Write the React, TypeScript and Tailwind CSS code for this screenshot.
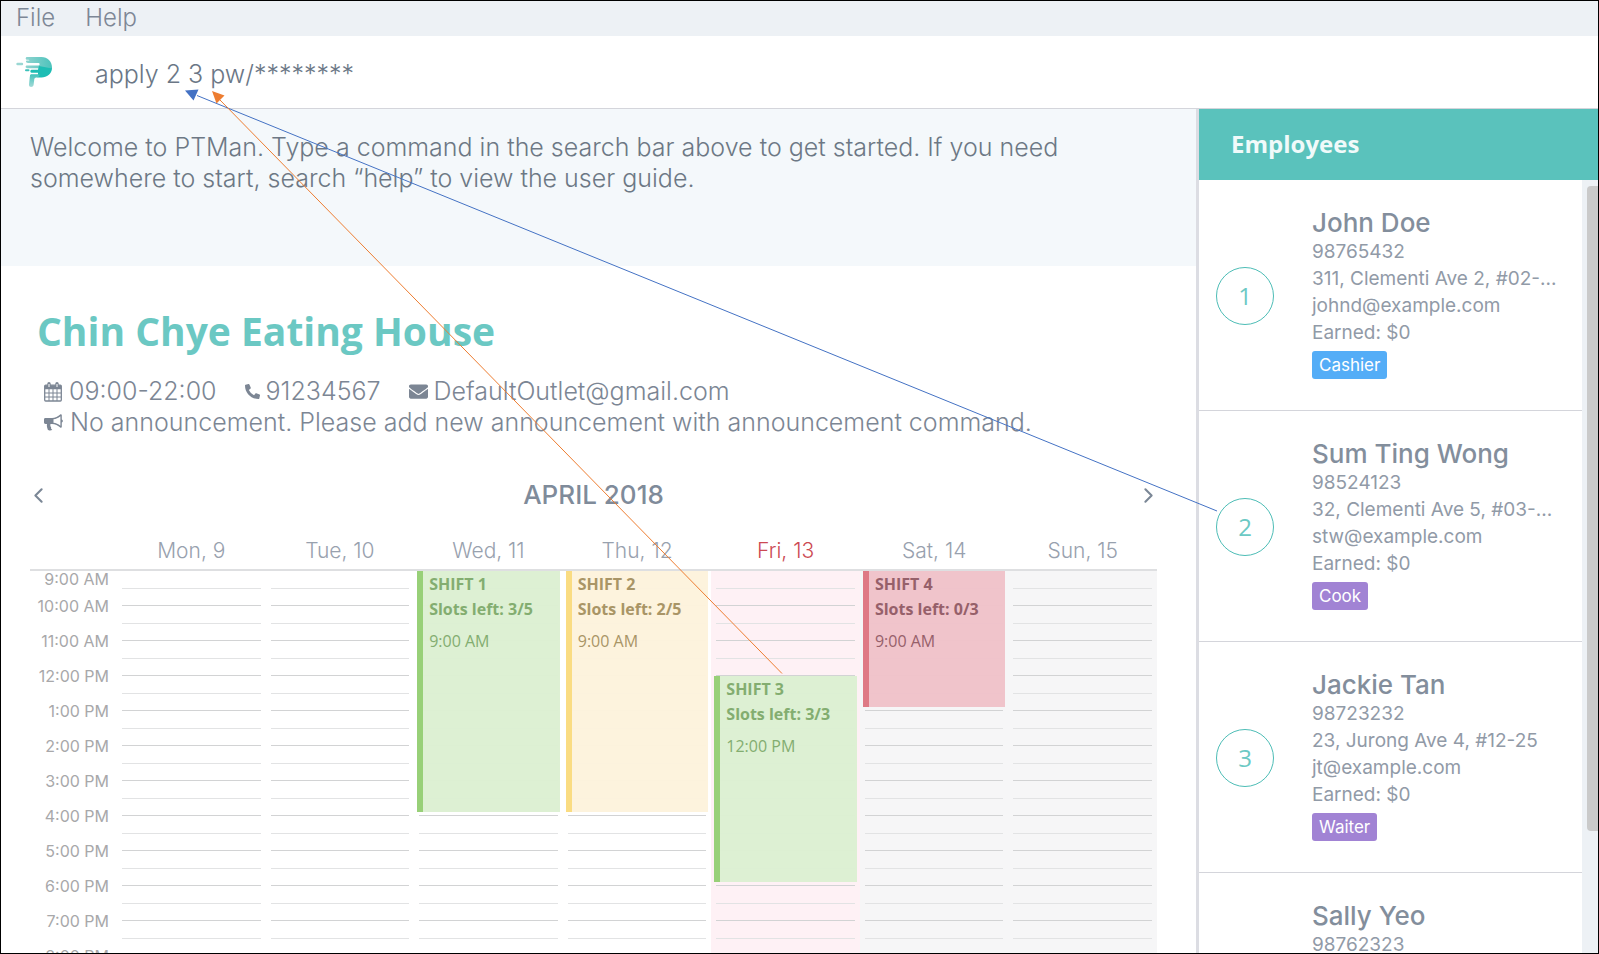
import { FaPhoneAlt, FaEnvelope } from "react-icons/fa";
import { FiChevronLeft, FiChevronRight } from "react-icons/fi";

type Shift = { name: string; slots: string; time: string; start: number; hours: number; tone: keyof typeof tones };
type Day = { label: string; today?: boolean; weekend?: boolean; shift?: Shift };
type Employee = { id: number; name: string; phone: string; address: string; email: string; earned: string; tag: string; tagColor: string };

const tones = {
  green: "border-[#98d078] bg-[#dcefd2]/97 text-[#83ad70]",
  yellow: "border-[#fadc82] bg-[#fdf3dc]/97 text-[#a99566]",
  red: "border-[#de7a85] bg-[#efc2c9]/97 text-[#96606a]",
};

const days: Day[] = [
  { label: "Mon, 9" },
  { label: "Tue, 10" },
  { label: "Wed, 11", shift: { name: "SHIFT 1", slots: "3/5", time: "9:00 AM", start: 0, hours: 7, tone: "green" } },
  { label: "Thu, 12", shift: { name: "SHIFT 2", slots: "2/5", time: "9:00 AM", start: 0, hours: 7, tone: "yellow" } },
  { label: "Fri, 13", today: true, shift: { name: "SHIFT 3", slots: "3/3", time: "12:00 PM", start: 3, hours: 6, tone: "green" } },
  { label: "Sat, 14", weekend: true, shift: { name: "SHIFT 4", slots: "0/3", time: "9:00 AM", start: 0, hours: 4, tone: "red" } },
  { label: "Sun, 15", weekend: true },
];

const hours = ["10:00 AM", "11:00 AM", "12:00 PM", "1:00 PM", "2:00 PM", "3:00 PM", "4:00 PM", "5:00 PM", "6:00 PM", "7:00 PM", "8:00 PM"];
const HOUR = 35;

const employees: Employee[] = [
  { id: 1, name: "John Doe", phone: "98765432", address: "311, Clementi Ave 2, #02-...", email: "johnd@example.com", earned: "$0", tag: "Cashier", tagColor: "bg-[#54adf7]" },
  { id: 2, name: "Sum Ting Wong", phone: "98524123", address: "32, Clementi Ave 5, #03-...", email: "stw@example.com", earned: "$0", tag: "Cook", tagColor: "bg-[#a183d4]" },
  { id: 3, name: "Jackie Tan", phone: "98723232", address: "23, Jurong Ave 4, #12-25", email: "jt@example.com", earned: "$0", tag: "Waiter", tagColor: "bg-[#a183d4]" },
  { id: 4, name: "Sally Yeo", phone: "98762323", address: "", email: "", earned: "$0", tag: "Cook", tagColor: "bg-[#a183d4]" },
];

function Logo() {
  return (
    <svg viewBox="0 0 36 30" className="h-[30px] w-9" aria-label="PTMan" role="img">
      <defs>
        <linearGradient id="top" x1="0" y1="0" x2="1" y2="0">
          <stop offset="0" stopColor="#8fd3cf" />
          <stop offset="1" stopColor="#4cc3bc" />
        </linearGradient>
        <linearGradient id="stem" x1="0" y1="0" x2="0" y2="1">
          <stop offset="0" stopColor="#45c2bb" />
          <stop offset="1" stopColor="#a3dad7" />
        </linearGradient>
      </defs>
      <path fill="url(#top)" d="M11 0H25.500C31.500 0 36 4.500 36 10.500V12L24 15H19.500V14.600H22C23.200 14.600 23.200 11.200 22 11.200H12C9 11.200 9 8.400 11 8.400H22.500C24 8.400 24 6 22.500 6H12C9.500 6 9.500 3.600 11 3.600H12.500C13.600 3.600 13.600 2.800 12.500 2.800H11C9.300 2.800 9.300 0 11 0Z" />
      <path fill="#1dbdb4" d="M23 9L36 11.500C35.500 17 31 20.500 25.500 20.500H22L20 19.500H15C13.800 19.500 13.800 17.600 15 17.600H22V15.800H15.500C14 15.800 14 12.800 15.500 12.800H22Z" />
      <path fill="url(#stem)" d="M15 17.600H24L22 20.500H20.500C18.800 20.500 18.300 21.500 18.200 23L17.600 28C17.200 30.600 12.600 30.600 13 27.600L13.600 22C13.800 19.500 14 18.500 15 17.600Z" />
      <path stroke="#9ad7d3" strokeWidth="2.400" strokeLinecap="round" d="M1.500 7H6" />
      <path stroke="#3cc1ba" strokeWidth="2" strokeLinecap="round" d="M10 13.200H12.500" />
    </svg>
  );
}

function CalendarIcon() {
  return (
    <svg viewBox="0 0 18 20" className="h-5 w-[18px]" fill="none" stroke="currentColor" aria-hidden="true">
      <rect x="0.700" y="3.200" width="16.600" height="15.800" rx="1" strokeWidth="1.300" />
      <path d="M1 3.500H17V7H1Z" fill="currentColor" strokeWidth="0.500" />
      <path d="M5 1.800V5M13 1.800V5" strokeWidth="3.400" strokeLinecap="round" />
      <path d="M5 2V5M13 2V5" stroke="white" strokeWidth="1" />
      <path d="M5 7V19M9 7V19M13 7V19M1 11H17M1 15H17" strokeWidth="1" />
    </svg>
  );
}

function BullhornIcon() {
  return (
    <svg viewBox="0 0 19 17" className="h-[17px] w-[19px]" fill="currentColor" aria-hidden="true">
      <path d="M1.500 4H8.500V10H6.500C6 11.500 6.500 12.800 7.200 13.500C6.700 14.300 7.300 15 8.300 15.700C7.300 16.800 4.600 16.700 3.800 15.700C3.300 13.800 2.500 12 3 10H1.500C0.500 10 0 9.400 0 8.600V5.400C0 4.600 0.500 4 1.500 4Z" />
      <path fillRule="evenodd" d="M8 4C11 4 14 2.500 16.500 0.300C17 0 17.800 0.300 17.800 1V5.500C19.200 6 19.200 8 17.800 8.500V13C17.800 13.700 17 14 16.500 13.700C14 11.500 11 10 8 10ZM9.500 5.300V8.700C12 9 14.300 10 16.400 11.700V2.300C14.300 4 12 5 9.500 5.300Z" />
    </svg>
  );
}

function HourLines() {
  return (
    <div className="mx-[5px]">
      {hours.map((h) => (
        <div key={h} className="h-[35px] border-b border-[#d2d3d4]">
          <div className="h-[18px] border-b border-[#e2e3e4]" />
        </div>
      ))}
    </div>
  );
}

function ShiftCard({ shift }: { shift: Shift }) {
  return (
    <div
      className={`absolute inset-x-[3px] border-l-[6px] pl-[6px] font-['Open_Sans','Noto_Sans',sans-serif] text-[16px] ${tones[shift.tone]}`}
      style={{ top: shift.start * HOUR, height: shift.hours * HOUR - 4 }}
    >
      <div className="leading-[26px] font-bold whitespace-nowrap">{shift.name}</div>
      <div className="leading-[25px] font-bold whitespace-nowrap">Slots left: {shift.slots}</div>
      <div className="pt-2 leading-[22px]">{shift.time}</div>
    </div>
  );
}

function Calendar() {
  return (
    <section className="ml-[29px] mr-[39px] mt-[42px]">
      <div className="flex items-center justify-between text-[#7b8796]">
        <button aria-label="Previous week" className="-ml-1"><FiChevronLeft size={25} /></button>
        <h2 className="text-[26px] leading-[30px] font-medium text-[#7f8b9a]">APRIL 2018</h2>
        <button aria-label="Next week" className="-mr-1"><FiChevronRight size={25} /></button>
      </div>
      <div className="mt-[28px] flex border-b-2 border-[#dedfe1] pb-[5px] pl-[87px] text-center text-[21px] leading-[26px] font-light text-[#98a1ae]">
        {days.map((d) => (
          <div key={d.label} className={`flex-1 ${d.today ? "text-[#cc4a53]" : ""}`}>{d.label}</div>
        ))}
      </div>
      <div className="flex">
        <div className="w-[87px] shrink-0 pr-[8px] text-right text-[16px] text-[#a8a8aa]">
          <div className="h-[18px] leading-[17px]">9:00 AM</div>
          {hours.map((h) => (
            <div key={h} className="h-[35px] leading-[35px]">{h}</div>
          ))}
        </div>
        {days.map((d) => (
          <div key={d.label} className={`relative min-w-0 flex-1 ${d.today ? "bg-[#fef1f5]" : d.weekend ? "bg-[#f6f6f7]" : ""}`}>
            <HourLines />
            {d.shift && <ShiftCard shift={d.shift} />}
          </div>
        ))}
      </div>
    </section>
  );
}

function EmployeeCard({ e }: { e: Employee }) {
  return (
    <li className="flex items-start border-b border-[#d4d5db] pb-[31px] pl-[17px] pt-[28px]">
      <span className="mt-[59px] flex size-[58px] shrink-0 items-center justify-center rounded-full border border-[#4dbdb6] font-['Open_Sans','Noto_Sans',sans-serif] text-[24px] text-[#6cc9c4]">
        {e.id}
      </span>
      <div className="ml-[38px] min-w-0 text-[19px] leading-[27px] whitespace-nowrap text-[#919aa7]">
        <h3 className="text-[26px] leading-[30px] font-medium text-[#838e9c]">{e.name}</h3>
        <p>{e.phone}</p>
        <p>{e.address}</p>
        <p>{e.email}</p>
        <p>Earned: {e.earned}</p>
        <span className={`mt-[5px] inline-block rounded-[3px] px-[7px] text-[17px] leading-[28px] text-white ${e.tagColor}`}>{e.tag}</span>
      </div>
    </li>
  );
}

function Arrows() {
  return (
    <svg className="pointer-events-none absolute left-0 top-0 h-full w-full" aria-hidden="true">
      <path d="M1216 510L196 94.500" stroke="#4472c4" strokeWidth="1" />
      <path d="M184 89.500L197.500 88.500L192.500 99.500Z" fill="#4472c4" />
      <path d="M781 672.500L219 99" stroke="#ed7d31" strokeWidth="1" />
      <path d="M211 90L223.500 94.500L215.500 102.500Z" fill="#ed7d31" />
    </svg>
  );
}

export default function App() {
  return (
    <div className="relative flex h-screen flex-col overflow-hidden border border-black bg-white font-['Inter',sans-serif] text-[#828c99]">
      <nav className="flex h-[35px] shrink-0 items-start gap-[30px] bg-[#edf1f5] pl-[15px] text-[24px] leading-[33px] font-light text-[#7d8796]">
        <button>File</button>
        <button>Help</button>
      </nav>
      <header className="flex h-[73px] shrink-0 items-center border-b border-[#d4d5db] pl-[15px]">
        <Logo />
        <input aria-label="Command" defaultValue="apply 2 3 pw/********" className="ml-[43px] min-w-0 flex-1 pt-1.5 text-[25px] font-light text-[#6b7786] outline-none" />
      </header>
      <div className="flex min-h-0 flex-1">
        <main className="min-w-0 flex-1 overflow-hidden">
          <p className="h-[157px] bg-[#f4f8fb] pl-[29px] pr-[100px] pt-[23px] text-[25px] leading-[31px] font-light text-[#6d7885]">
            Welcome to PTMan. Type a command in the search bar above to get started. If you need somewhere to start, search “help” to view the user guide.
          </p>
          <h1 className="ml-[36px] mt-[37px] font-['Open_Sans','Noto_Sans',sans-serif] text-[39px] leading-[56px] font-bold text-[#6bc8c3]">Chin Chye Eating House</h1>
          <div className="ml-[43px] mt-[17px] text-[25px] leading-[31px] font-light text-[#7c8694]">
            <div className="flex gap-[28px]">
              <span className="flex items-center gap-[7px]"><CalendarIcon />09:00-22:00</span>
              <span className="flex items-center gap-[6px]"><FaPhoneAlt size={15} />91234567</span>
              <span className="flex items-center gap-[6px]"><FaEnvelope size={19} />DefaultOutlet@gmail.com</span>
            </div>
            <div className="flex items-center gap-[7px]"><BullhornIcon />No announcement. Please add new announcement with announcement command.</div>
          </div>
          <Calendar />
        </main>
        <aside className="flex w-[402px] shrink-0 flex-col border-l-[3px] border-[#dcdde3]">
          <h2 className="bg-[#5ac2bc] pb-[19px] pl-[32px] pt-[17px] font-['Open_Sans','Noto_Sans',sans-serif] text-[24px] leading-[35px] font-bold text-[#f0fafa]">Employees</h2>
          <div className="flex min-h-0 flex-1">
            <ul className="min-w-0 flex-1 overflow-hidden">
              {employees.map((e) => <EmployeeCard key={e.id} e={e} />)}
            </ul>
            <div className="w-4 bg-[#edf1f5] pl-[5px] pt-[6px]">
              <div className="h-[645px] rounded-l-[4px] bg-[#cacaca]" />
            </div>
          </div>
        </aside>
      </div>
      <Arrows />
    </div>
  );
}
